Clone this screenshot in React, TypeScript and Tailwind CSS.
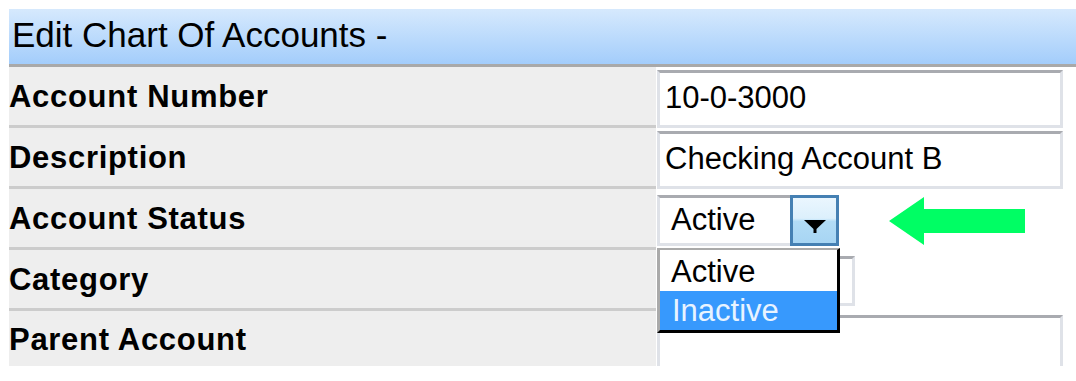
import React from 'react';

const labelCls =
  'flex h-[61px] items-center border-b-[3px] border-[#cccccc] bg-[#eeeeee] text-[31px] font-bold leading-none tracking-[0.7px]';

function TextBox({ value, className = '' }: { value: string; className?: string }) {
  return (
    <div
      className={`flex h-[58px] w-[406px] items-center border-[3px] border-[#dfe2e8] border-t-[#a9abb0] pb-[4px] pl-[5px] text-[31px] leading-none ${className}`}
    >
      {value}
    </div>
  );
}

function ArrowDown() {
  return (
    <svg width="22" height="13" viewBox="0 0 22 13">
      <polygon points="0,0 22,0 12.5,9 12.5,13 9.5,13 9.5,9" fill="#000" />
    </svg>
  );
}

function GreenArrow() {
  return (
    <svg width="136" height="48" viewBox="0 0 136 48">
      <polygon points="0,24 35,0 35,12 136,12 136,36 35,36 35,48" fill="#00fe64" />
    </svg>
  );
}

export default function App() {
  return (
    <div className="relative h-[381px] w-[1076px] overflow-hidden bg-white pl-[9px] pt-[9px] font-['Liberation_Sans',Arial,sans-serif] text-black">
      <header className="flex h-[58px] items-center border-b-[3px] border-[#a9a9a9] bg-gradient-to-b from-[#d6e9fd] to-[#a3cdfb] pb-[5px] pl-[3px] text-[35px] leading-none">
        Edit Chart Of Accounts -
      </header>

      <div className="grid grid-cols-[647px_1fr]">
        {/* Account Number */}
        <div className={labelCls}>Account Number</div>
        <div className="bg-white pl-[1px] pt-[3px]">
          <TextBox value="10-0-3000" />
        </div>

        {/* Description */}
        <div className={labelCls}>Description</div>
        <div className="bg-white pl-[1px] pt-[3px]">
          <TextBox value="Checking Account B" />
        </div>

        {/* Account Status */}
        <div className={labelCls}>Account Status</div>
        <div className="relative z-10 bg-white pl-[1px] pt-[6px]">
          <div className="flex h-[51px] w-[182px]">
            <div className="flex flex-1 items-center border-y-[3px] border-l-[3px] border-[#dfe2e8] border-t-[#a9abb0] pb-[2px] pl-[11px] text-[31px] leading-none">
              Active
            </div>
            <div className="flex w-[49px] items-start justify-center border-[3px] border-[#4580b3] bg-[linear-gradient(to_bottom,#eaf6fe_0%,#dcf0fc_45%,#b2dcf6_52%,#a7d5f3_100%)] pt-[22px]">
              <ArrowDown />
            </div>
          </div>

          <div className="absolute left-[1px] top-[59px] w-[183px] border-b-[3px] border-l-[3px] border-r-[3px] border-t-[2px] border-[#000] border-l-[#aaaaaa] border-t-[#aaaaaa] bg-white text-[31px] leading-none">
            <div className="flex h-[41px] items-center pl-[11px] pt-[1px]">Active</div>
            <div className="flex h-[39px] items-center bg-[#3799fd] pl-[12px] text-[#e8f3ff]">Inactive</div>
          </div>

          <div className="absolute left-[233px] top-[8px]">
            <GreenArrow />
          </div>
        </div>

        {/* Category */}
        <div className={labelCls}>Category</div>
        <div className="bg-white pl-[1px] pt-[6px]">
          <div className="h-[50px] w-[198px] border-[3px] border-[#dfe2e8] border-t-[#a9abb0]" />
        </div>

        {/* Parent Account */}
        <div className="flex h-[55px] items-center bg-[#eeeeee] pt-[2px] text-[31px] font-bold leading-none tracking-[0.7px]">
          Parent Account
        </div>
        <div className="bg-white pl-[1px] pt-[4px]">
          <div className="h-[51px] w-[406px] border-x-[3px] border-t-[3px] border-[#dfe2e8] border-t-[#a9abb0]" />
        </div>
      </div>
    </div>
  );
}
